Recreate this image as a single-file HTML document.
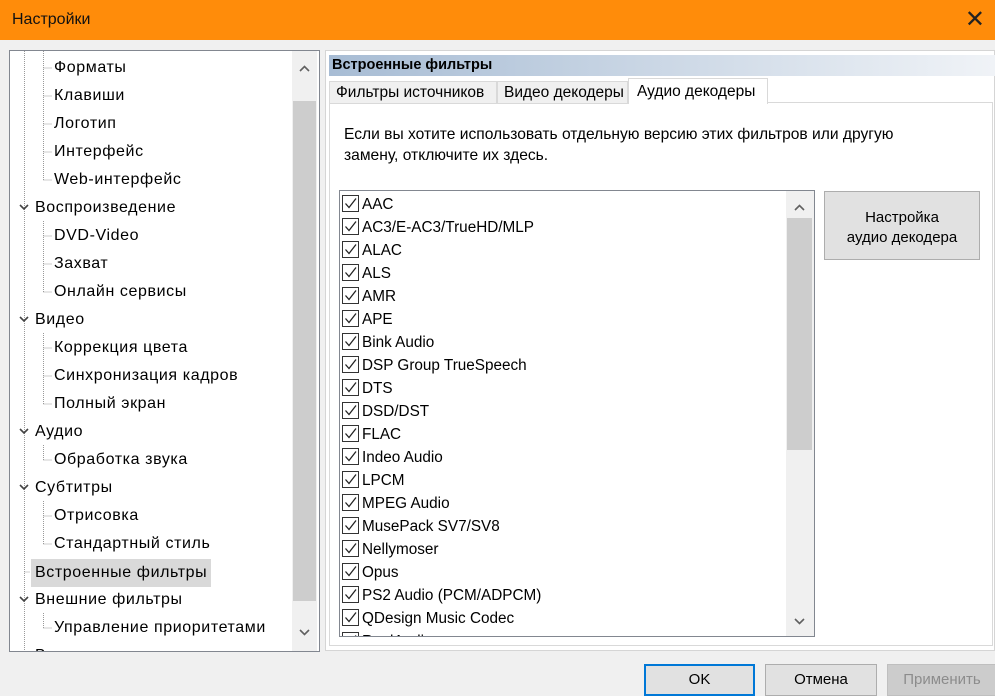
<!DOCTYPE html><html><head><meta charset="utf-8"><style>
*{box-sizing:border-box;margin:0;padding:0}
body{width:995px;height:696px;background:#f0f0f0;font-family:"Liberation Sans",sans-serif;font-size:15px;color:#000;position:relative;overflow:hidden}
.a{position:absolute}
.title{left:0;top:0;width:995px;height:40px;background:#ff8c0a;color:#111;font-size:16px;line-height:40px;padding-left:12px}
.tree{left:9px;top:50px;width:311px;height:602px;background:#fff;border:1px solid #828790;overflow:hidden}
.ti{position:absolute;height:24px;line-height:24px;white-space:nowrap;font-size:16px;letter-spacing:0.6px}
.sb{background:#f0f0f0}
.th{background:#cdcdcd}
.row{position:absolute;left:2px;height:23px;line-height:23px;white-space:nowrap;font-size:15.3px}
.cb{display:inline-block;width:17px;height:17px;border:1px solid #333;vertical-align:middle;margin-right:3px;position:relative;top:-1px;background:#fff}
.cb svg{position:absolute;left:1px;top:1px}
.btn{position:absolute;background:#e1e1e1;border:1px solid #adadad;text-align:center;font-size:15px}
.tab{position:absolute;border:1px solid #d9d9d9;background:#f0f0f0;font-size:15.5px;white-space:nowrap}
</style></head><body>
<div class="a title">Настройки<span style="position:absolute;right:10px;top:0;font-size:24px;color:#222">✕</span></div>
<div class="a tree">
<svg class="a" style="left:0;top:0" width="290" height="600"><g stroke="#999" stroke-dasharray="1,1" fill="none">
<line x1="14.5" y1="0" x2="14.5" y2="600"/><line x1="33.5" y1="0" x2="33.5" y2="130"/>
<line x1="33.5" y1="17" x2="42" y2="17"/><line x1="33.5" y1="45" x2="42" y2="45"/><line x1="33.5" y1="73" x2="42" y2="73"/><line x1="33.5" y1="101" x2="42" y2="101"/><line x1="33.5" y1="129" x2="42" y2="129"/>
<line x1="33.5" y1="170" x2="33.5" y2="241"/><line x1="33.5" y1="185" x2="42" y2="185"/><line x1="33.5" y1="213" x2="42" y2="213"/><line x1="33.5" y1="241" x2="42" y2="241"/>
<line x1="33.5" y1="282" x2="33.5" y2="353"/><line x1="33.5" y1="297" x2="42" y2="297"/><line x1="33.5" y1="325" x2="42" y2="325"/><line x1="33.5" y1="353" x2="42" y2="353"/>
<line x1="33.5" y1="394" x2="33.5" y2="409"/><line x1="33.5" y1="409" x2="42" y2="409"/>
<line x1="33.5" y1="450" x2="33.5" y2="493"/><line x1="33.5" y1="465" x2="42" y2="465"/><line x1="33.5" y1="493" x2="42" y2="493"/>
<line x1="14.5" y1="521" x2="20" y2="521"/>
<line x1="33.5" y1="562" x2="33.5" y2="577"/><line x1="33.5" y1="577" x2="42" y2="577"/>
</g>
<g stroke="#444" stroke-width="1.6" fill="none"><path d="M10 154l4 4 4-4"/><path d="M10 266l4 4 4-4"/><path d="M10 378l4 4 4-4"/><path d="M10 434l4 4 4-4"/><path d="M10 546l4 4 4-4"/></g></svg>
<div class="ti" style="left:44px;top:5px">Форматы</div>
<div class="ti" style="left:44px;top:33px">Клавиши</div>
<div class="ti" style="left:44px;top:61px">Логотип</div>
<div class="ti" style="left:44px;top:89px">Интерфейс</div>
<div class="ti" style="left:44px;top:117px">Web-интерфейс</div>
<div class="ti" style="left:25px;top:145px">Воспроизведение</div>
<div class="ti" style="left:44px;top:173px">DVD-Video</div>
<div class="ti" style="left:44px;top:201px">Захват</div>
<div class="ti" style="left:44px;top:229px">Онлайн сервисы</div>
<div class="ti" style="left:25px;top:257px">Видео</div>
<div class="ti" style="left:44px;top:285px">Коррекция цвета</div>
<div class="ti" style="left:44px;top:313px">Синхронизация кадров</div>
<div class="ti" style="left:44px;top:341px">Полный экран</div>
<div class="ti" style="left:25px;top:369px">Аудио</div>
<div class="ti" style="left:44px;top:397px">Обработка звука</div>
<div class="ti" style="left:25px;top:425px">Субтитры</div>
<div class="ti" style="left:44px;top:453px">Отрисовка</div>
<div class="ti" style="left:44px;top:481px">Стандартный стиль</div>
<div class="ti" style="left:21px;top:508px;height:28px;line-height:28px;background:#d9d9d9;padding:0 4px">Встроенные фильтры</div>
<div class="ti" style="left:25px;top:537px">Внешние фильтры</div>
<div class="ti" style="left:44px;top:565px">Управление приоритетами</div>
<div class="ti" style="left:25px;top:593px">В</div>
<div class="a sb" style="left:282px;top:0;width:25px;height:600px"></div>
<div class="a th" style="left:283px;top:50px;width:23px;height:500px"></div>
<svg class="a" style="left:282px;top:0" width="25" height="600"><g stroke="#606060" stroke-width="1.6" fill="none"><path d="M8 20l4.5-4.5 4.5 4.5"/><path d="M8 579l4.5 4.5 4.5-4.5"/></g></svg>
</div>
<div class="a" style="left:325px;top:50px;width:670px;height:601px;background:#fff;border:1px solid #d5d5d5"></div>
<div class="a" style="left:329px;top:55px;width:666px;height:21px;background:linear-gradient(90deg,#a7bcd4,#f0f3f7);font-weight:bold;font-size:14.5px;line-height:21px;padding-left:3px">Встроенные фильтры</div>
<div class="a" style="left:329px;top:102px;width:664px;height:544px;border:1px solid #d9d9d9;background:#fff"></div>
<div class="tab" style="left:329px;top:81px;width:168px;height:23px;line-height:22px;padding-left:6px">Фильтры источников</div>
<div class="tab" style="left:497px;top:81px;width:131px;height:23px;line-height:22px;padding-left:6px">Видео декодеры</div>
<div class="tab" style="left:628px;top:78px;width:140px;height:26px;border-bottom:none;background:#fff;line-height:25px;padding-left:8px">Аудио декодеры</div>
<div class="a" style="left:344px;top:124px;font-size:15.6px;line-height:21px;width:580px">Если вы хотите использовать отдельную версию этих фильтров или другую замену, отключите их здесь.</div>
<div class="a" style="left:339px;top:190px;width:476px;height:447px;border:1px solid #828790;background:#fff;overflow:hidden">
<div id="rows"></div>
<div class="a sb" style="left:446px;top:0;width:28px;height:447px"></div>
<div class="a th" style="left:447px;top:27px;width:25px;height:232px"></div>
<svg class="a" style="left:446px;top:0" width="28" height="447"><g stroke="#606060" stroke-width="1.6" fill="none"><path d="M9 19l4.5-4.5 4.5 4.5"/><path d="M9 428l4.5 4.5 4.5-4.5"/></g></svg>
</div>
<div class="btn" style="left:824px;top:191px;width:156px;height:69px;padding-top:16px;line-height:20px">Настройка<br>аудио декодера</div>
<div class="btn" style="left:644px;top:664px;width:111px;height:32px;border:2px solid #0078d7;line-height:28px">OK</div>
<div class="btn" style="left:765px;top:664px;width:112px;height:32px;line-height:30px">Отмена</div>
<div class="btn" style="left:887px;top:664px;width:110px;height:32px;line-height:30px;color:#8c8c8c;background:#cccccc;border-color:#bfbfbf">Применить</div>
<script>
var n=["AAC","AC3/E-AC3/TrueHD/MLP","ALAC","ALS","AMR","APE","Bink Audio","DSP Group TrueSpeech","DTS","DSD/DST","FLAC","Indeo Audio","LPCM","MPEG Audio","MusePack SV7/SV8","Nellymoser","Opus","PS2 Audio (PCM/ADPCM)","QDesign Music Codec","RealAudio"];
var h="";n.forEach(function(t,i){h+='<div class="row" style="top:'+(2+i*23)+'px"><span class="cb"><svg width="13" height="13"><path d="M1.5 6.5l3.5 4 7-9" stroke="#222" stroke-width="1.3" fill="none"/></svg></span>'+t+'</div>'});
document.getElementById("rows").innerHTML=h;
</script>
</body></html>
